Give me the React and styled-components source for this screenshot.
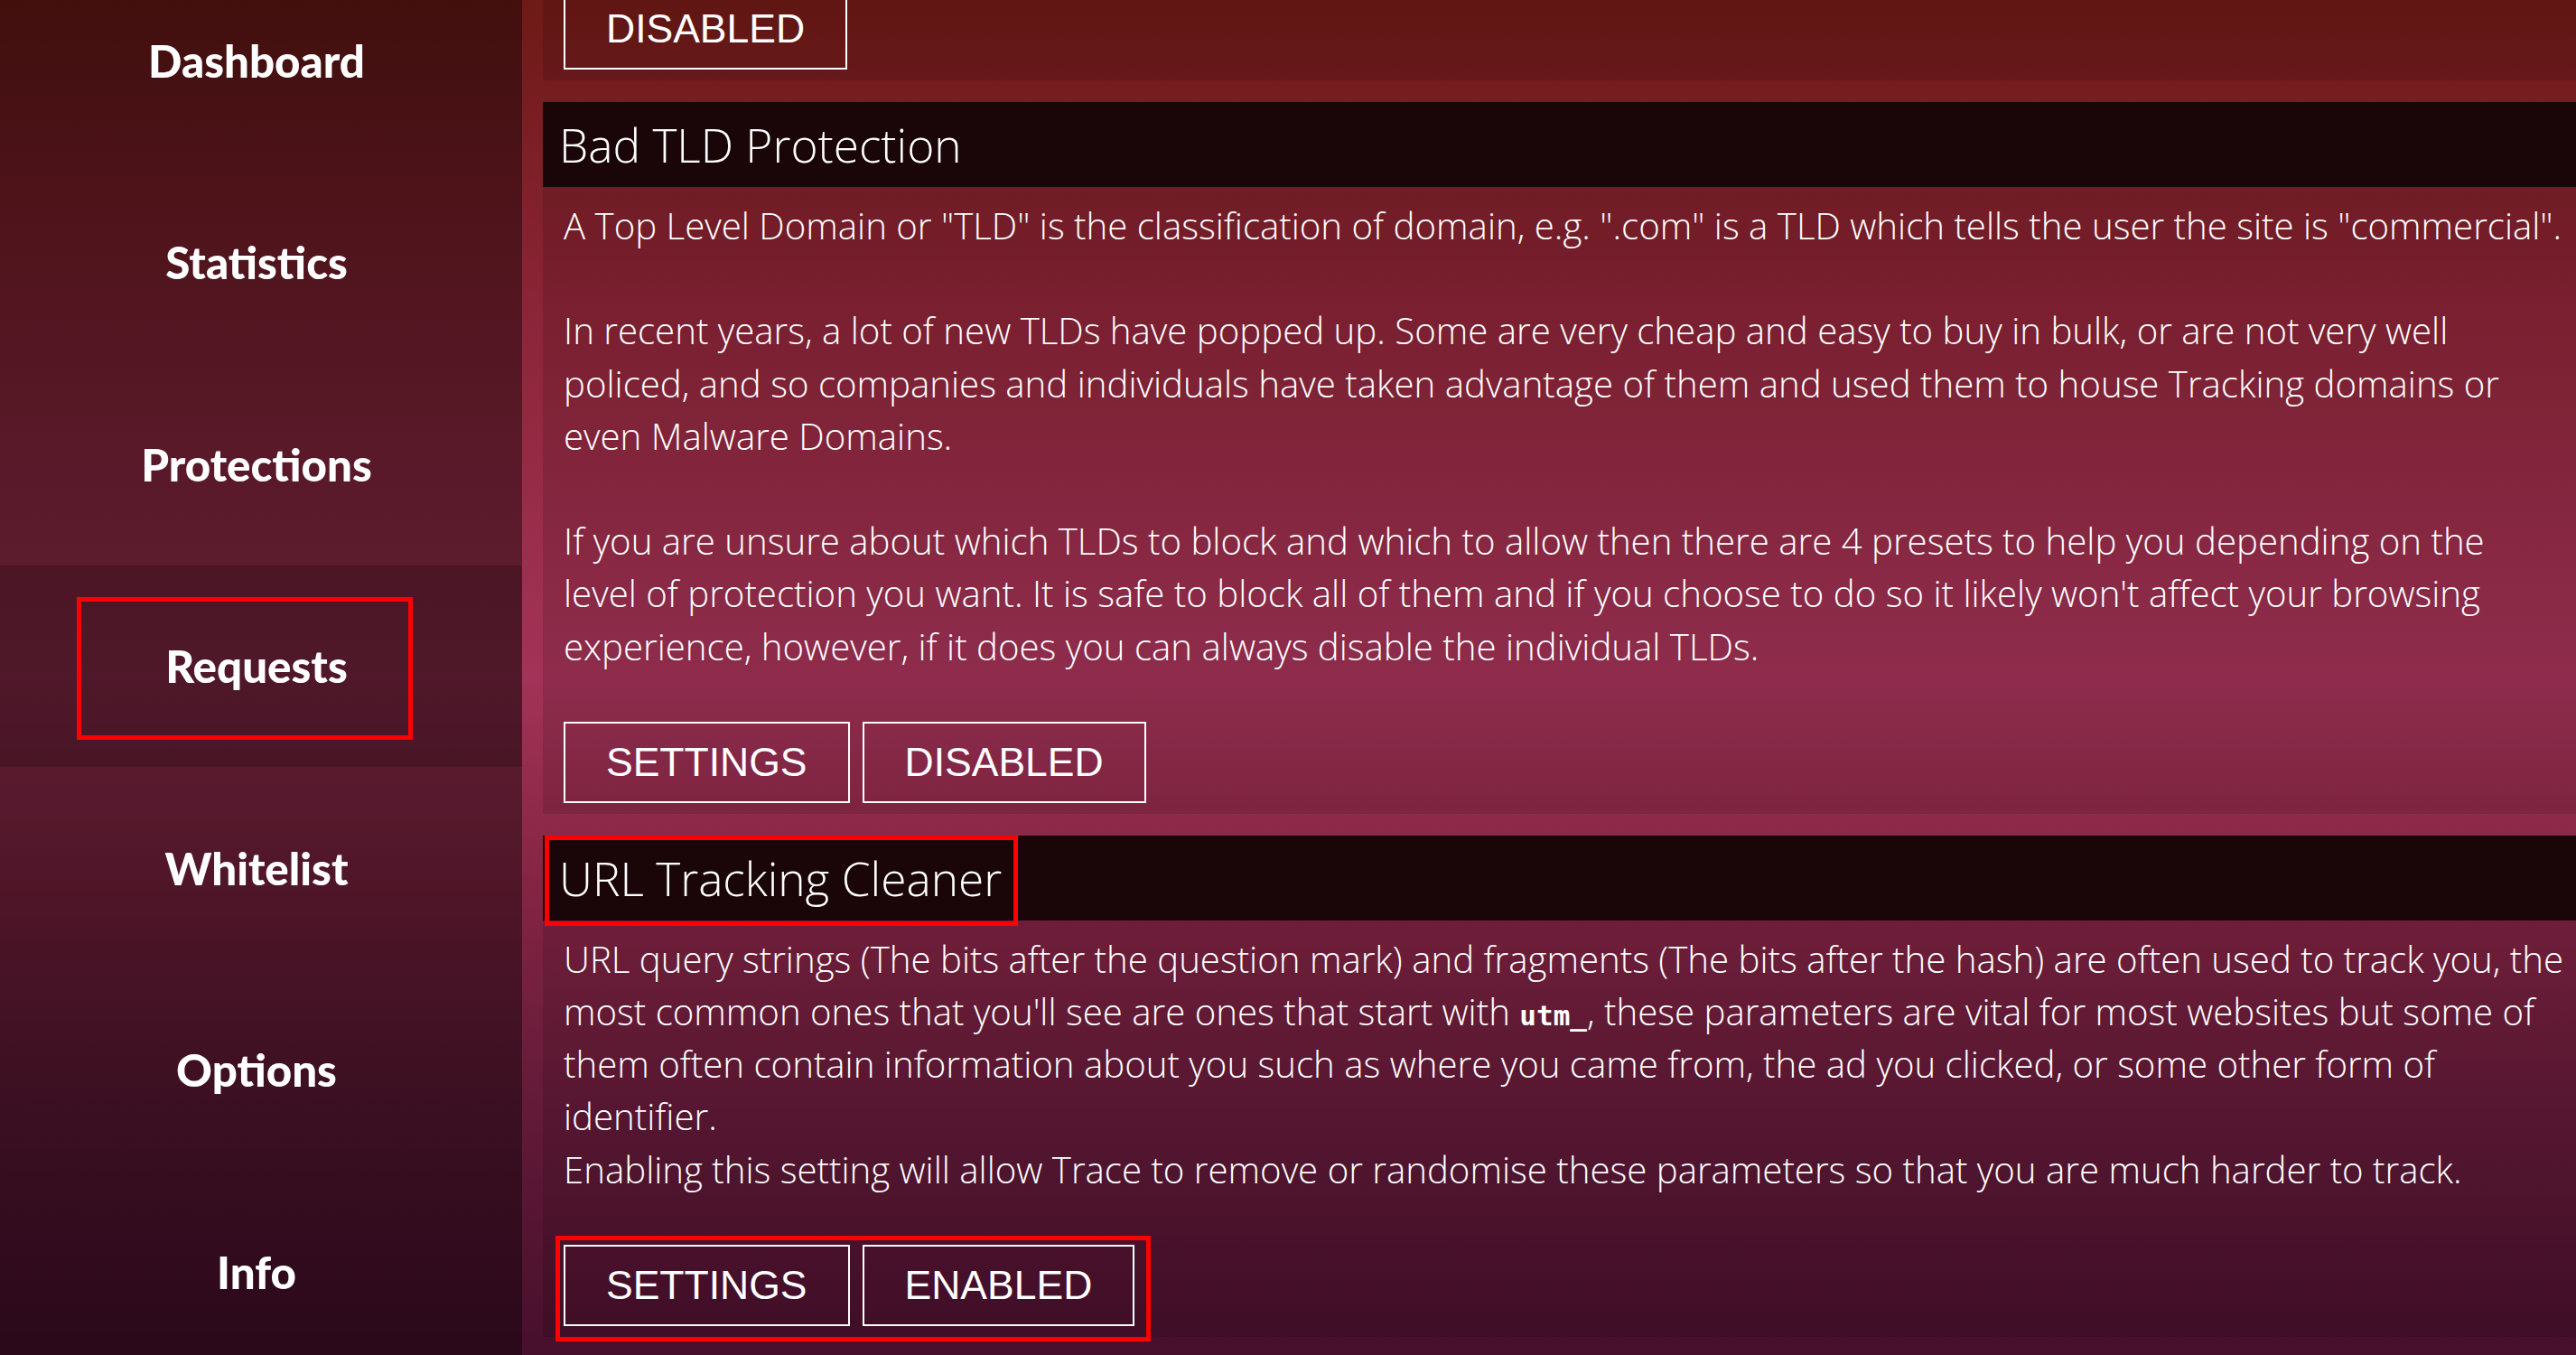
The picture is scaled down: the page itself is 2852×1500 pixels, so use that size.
import React from 'react'
import styled, { createGlobalStyle, css } from 'styled-components'

const GlobalStyle = createGlobalStyle`
html, body {
    margin: 0;
    padding: 0;
    height: 100%;
    overflow: hidden;
}
body {
    background: linear-gradient(180deg, #6e1a16 0%, #8a2436 22%, #a33358 50%, #832443 66%, #621a38 82%, #470f2c 100%);
    color: #fff;
    font-family: "Open Sans", "Noto Sans", sans-serif;
}
`

const navItems = ['Dashboard', 'Statistics', 'Protections', 'Requests', 'Whitelist', 'Options', 'Info']

const App = () => {
    return (
        <>
            <GlobalStyle />
            <Layout>
                <Sidebar>
                    <NavList>
                        {navItems.map((item) => (
                            <NavItem key={item} $active={item === 'Requests'}>
                                {item}
                            </NavItem>
                        ))}
                    </NavList>
                </Sidebar>

                <Main>
                    <Panel>
                        <PanelBody>
                            <ButtonRow>
                                <Button>Disabled</Button>
                            </ButtonRow>
                        </PanelBody>
                    </Panel>

                    <Panel>
                        <PanelHeader>
                            <Title>Bad TLD Protection</Title>
                        </PanelHeader>
                        <PanelBody>
                            <Text>
                                A Top Level Domain or "TLD" is the classification of domain, e.g. ".com" is a TLD which tells the user the site is "commercial".
                                <br /><br />
                                In recent years, a lot of new TLDs have popped up. Some are very cheap and easy to buy in bulk, or are not very well policed, and so companies and individuals have taken advantage of them and used them to house Tracking domains or even Malware Domains.
                                <br /><br />
                                If you are unsure about which TLDs to block and which to allow then there are 4 presets to help you depending on the<br />
                                level of protection you want. It is safe to block all of them and if you choose to do so it likely won't affect your browsing experience, however, if it does you can always disable the individual TLDs.
                            </Text>
                            <ButtonRow>
                                <Button>Settings</Button>
                                <Button>Disabled</Button>
                            </ButtonRow>
                        </PanelBody>
                    </Panel>

                    <Panel>
                        <PanelHeader>
                            <Title $marked>URL Tracking Cleaner</Title>
                        </PanelHeader>
                        <PanelBody>
                            <Text>
                                URL query strings (The bits after the question mark) and fragments (The bits after the hash) are often used to track you, the most common ones that you'll see are ones that start with <Code>utm_</Code>, these parameters are vital for most websites but some of them often contain information about you such as where you came from, the ad you clicked, or some other form of identifier.
                                <br />
                                Enabling this setting will allow Trace to remove or randomise these parameters so that you are much harder to track.
                            </Text>
                            <ButtonRow $marked>
                                <Button>Settings</Button>
                                <Button>Enabled</Button>
                            </ButtonRow>
                        </PanelBody>
                    </Panel>
                </Main>
            </Layout>
        </>
    )
}

const redBox = css`
    content: '';
    position: absolute;
    border: 5px solid #ff0000;
    pointer-events: none;
`

const Layout = styled.div`
display: flex;
height: 100vh;
overflow: hidden;
`

const Sidebar = styled.nav`
width: 578px;
flex-shrink: 0;
background: rgba(0, 0, 0, 0.4);
overflow: hidden;
`

const NavList = styled.div`
display: flex;
flex-direction: column;
margin-top: -45px;
`

const NavItem = styled.div`
position: relative;
height: 223.5px;
display: flex;
align-items: center;
justify-content: center;
padding-right: 10px;
font-family: Lato, "Open Sans", sans-serif;
font-weight: 900;
font-size: 49.3px;
color: #fff;
background: ${(p) => (p.$active ? 'rgba(0, 0, 0, 0.18)' : 'transparent')};
${(p) => p.$active && css`
    &::after {
        ${redBox}
        top: 35px;
        bottom: 30px;
        left: 85px;
        right: 121px;
    }
`}
`

const Main = styled.main`
flex: 1;
min-width: 0;
display: flex;
flex-direction: column;
gap: 24px;
padding-left: 23px;
margin-top: -27px;
`

const Panel = styled.section`
background: rgba(0, 0, 0, 0.12);
`

const PanelHeader = styled.div`
height: 94px;
display: flex;
align-items: stretch;
padding-left: 2px;
background: #1a0508;
`

const Title = styled.h2`
position: relative;
margin: 0;
display: flex;
align-items: center;
padding: 0 18px 0 16px;
font-weight: 300;
font-size: 51.4px;
color: #fff;
${(p) => p.$marked && css`
    &::after {
        ${redBox}
        top: 0;
        left: 0;
        right: 0;
        bottom: -6px;
    }
`}
`

const PanelBody = styled.div`
padding: 14px 0 12px 23px;
`

const Text = styled.p`
margin: 0 0 54px;
font-weight: 300;
font-size: 40.2px;
line-height: 58.2px;
`

const Code = styled.code`
font-family: "DejaVu Sans Mono", "Liberation Mono", monospace;
font-weight: 700;
font-size: 31px;
line-height: 1;
`

const ButtonRow = styled.div`
position: relative;
display: flex;
gap: 14px;
width: fit-content;
${(p) => p.$marked && css`
    &::after {
        ${redBox}
        top: -10px;
        bottom: -17px;
        left: -9px;
        right: -18px;
    }
`}
`

const Button = styled.button`
height: 90px;
padding: 0 45px;
border: 2px solid #fff;
background: transparent;
color: #fff;
font-family: "Liberation Sans", Arial, sans-serif;
font-size: 44.5px;
text-transform: uppercase;
cursor: pointer;
`

export default App
